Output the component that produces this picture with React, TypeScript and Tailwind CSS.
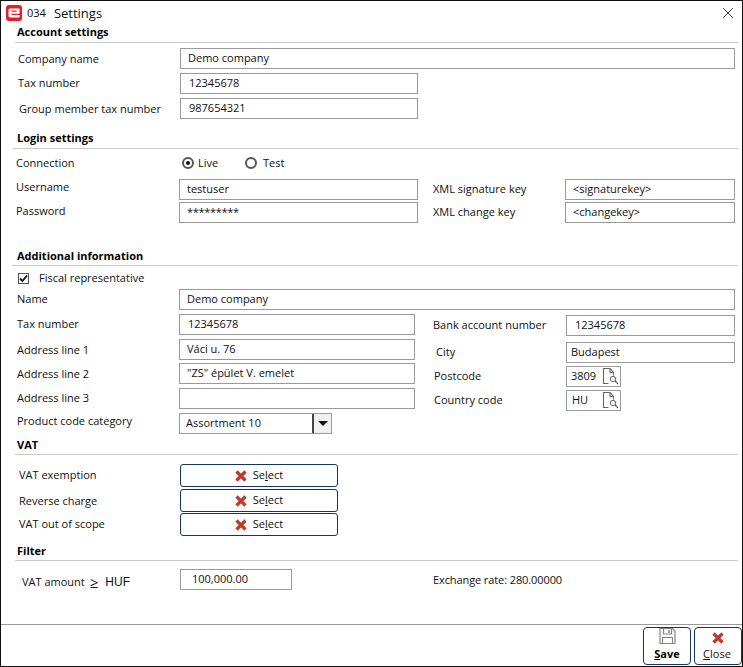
import { X } from 'lucide-react';

const font = { fontFamily: '"Open Sans", sans-serif' };

function Heading({ title, className = '' }: { title: string; className?: string }) {
  return (
    <div className={`border-b border-[#c8c8c8] h-[20px] text-[11px] leading-[17px] font-bold text-black ${className}`}>
      {title}
    </div>
  );
}

function Field({ value, className = '' }: { value: string; className?: string }) {
  return (
    <div className={`border border-[#9a9a9a] bg-white h-[21px] pl-[7px] text-[11px] leading-[18px] text-[#111] whitespace-nowrap ${className}`}>
      {value}
    </div>
  );
}

function Label({ text, className = '' }: { text: string; className?: string }) {
  return <div className={`text-[11px] leading-[16px] text-[#111] whitespace-nowrap ${className}`}>{text}</div>;
}

function LookupIcon() {
  return (
    <svg width="17" height="17" viewBox="0 0 17 17" fill="none" className="shrink-0">
      <path d="M6.5 15.500H1.500V.500h6.500l3.500 4v3M8 .500v4h3.500" stroke="#666" strokeWidth="1.1" />
      <circle cx="11" cy="11" r="2.700" stroke="#666" strokeWidth="1" />
      <path d="M13 13l3 3" stroke="#666" strokeWidth="1.3" />
    </svg>
  );
}

function RedX({ size = 12 }: { size?: number }) {
  return (
    <svg width={size} height={size} viewBox="0 0 12 12" className="shrink-0">
      <path d="M1.500 1.500l9 9M10.500 1.500l-9 9" stroke="#c0392b" strokeWidth="3.200" />
    </svg>
  );
}

function SelectButton({ className = '' }: { className?: string }) {
  return (
    <div className={`w-[158px] h-[23px] rounded-[3px] border border-[#12395b] flex items-center justify-center gap-[6px] text-[11px] text-[#111] ${className}`}>
      <RedX />
      <span>
        Se<span className="underline">l</span>ect
      </span>
    </div>
  );
}

export default function App() {
  return (
    <div style={font} className="w-[743px] h-[667px] bg-white border border-[#111] flex flex-col overflow-hidden">
      {/* title */}
      <div className="h-[22px] flex items-center pl-[5px] pr-[5px] pt-[2px] text-[#111] shrink-0">
        <div className="w-[16px] h-[16px] bg-[#e2202c] rounded-[3px] flex items-center justify-center">
          <svg width="12" height="10" viewBox="0 0 12 10">
            <path d="M.5 2.200Q.5 .500 2 .500H11.500V5.800H3.500V7H11.500V9.500H2Q.5 9.500 .5 7.800z M3.500 2.600V3.800H8.500V2.600z" fill="#fff" fillRule="evenodd" />
          </svg>
        </div>
        <span className="ml-[5px] text-[11px]">034</span>
        <span className="ml-[8px] text-[13px] leading-none">Settings</span>
        <X size={18} strokeWidth={1.1} className="ml-auto text-[#111]" />
      </div>

      {/* account settings */}
      <Heading title="Account settings" className="ml-[14px] mr-[4px] pl-[2px]" />
      <div className="pl-[17px] flex items-center h-[21px] mt-[5px]">
        <Label text="Company name" className="w-[162px]" />
        <Field value="Demo company" className="w-[555px]" />
      </div>
      <div className="pl-[17px] flex items-center h-[21px] mt-[4px]">
        <Label text="Tax number" className="w-[162px] mb-[2px]" />
        <Field value="12345678" className="w-[238px] !pl-[8px]" />
      </div>
      <div className="pl-[18px] flex items-center h-[21px] mt-[4px]">
        <Label text="Group member tax number" className="w-[161px]" />
        <Field value="987654321" className="w-[238px] !pl-[8px]" />
      </div>

      {/* login settings */}
      <Heading title="Login settings" className="ml-[12px] mr-[4px] pl-[4px] mt-[10px]" />
      <div className="pl-[15px] flex items-center h-[16px] mt-[6px]">
        <Label text="Connection" className="w-[166px]" />
        <div className="w-[12px] h-[12px] rounded-full border-2 border-[#555] flex items-center justify-center">
          <div className="w-[4px] h-[4px] rounded-full bg-[#111]" />
        </div>
        <Label text="Live" className="ml-[4px] w-[47px]" />
        <div className="w-[12px] h-[12px] rounded-full border-2 border-[#555]" />
        <Label text="Test" className="ml-[6px]" />
      </div>
      <div className="pl-[15px] flex items-center h-[21px] mt-[8px]">
        <Label text="Username" className="w-[163px] mb-[6px]" />
        <Field value="testuser" className="w-[239px]" />
        <Label text="XML signature key" className="ml-[15px] w-[132px] mb-[2px]" />
        <Field value="<signaturekey>" className="w-[170px]" />
      </div>
      <div className="pl-[15px] flex items-center h-[21px] mt-[2px]">
        <Label text="Password" className="w-[163px] mb-[4px]" />
        <Field value="*********" className="w-[239px] tracking-[-0.3px]" />
        <Label text="XML change key" className="ml-[15px] w-[132px] mb-[2px]" />
        <Field value="<changekey>" className="w-[170px]" />
      </div>

      {/* additional information */}
      <Heading title="Additional information" className="ml-[11px] mr-[4px] pl-[5px] pt-[1px] mt-[23px]" />
      <div className="pl-[17px] flex items-center h-[16px] mt-[4px]">
        <div className="w-[11px] h-[11px] border border-[#555] flex items-center justify-center">
          <svg width="9" height="9" viewBox="0 0 9 9" fill="none">
            <path d="M1 4.500l2.500 2.500L8 1.500" stroke="#111" strokeWidth="1.800" />
          </svg>
        </div>
        <Label text="Fiscal representative" className="ml-[10px]" />
      </div>
      <div className="pl-[16px] flex items-center h-[21px] mt-[3px]">
        <Label text="Name" className="w-[162px] mb-[2px]" />
        <Field value="Demo company" className="w-[556px]" />
      </div>

      <div className="flex mt-[4px]">
        <div className="w-[432px] pl-[16px] shrink-0 flex flex-col">
          <div className="flex items-center h-[21px]">
            <Label text="Tax number" className="w-[162px] mb-[2px]" />
            <Field value="12345678" className="w-[236px] !pl-[8px]" />
          </div>
          <div className="flex items-center h-[21px] mt-[4px]">
            <Label text="Address line 1" className="w-[162px]" />
            <Field value="Váci u. 76" className="w-[236px]" />
          </div>
          <div className="flex items-center h-[21px] mt-[3px]">
            <Label text="Address line 2" className="w-[162px]" />
            <Field value='"ZS" épület V. emelet' className="w-[236px]" />
          </div>
          <div className="flex items-center h-[21px] mt-[4px]">
            <Label text="Address line 3" className="w-[162px] mb-[2px]" />
            <Field value="" className="w-[236px]" />
          </div>
          <div className="flex items-center h-[21px] mt-[4px]">
            <Label text="Product code category" className="w-[162px] mb-[6px]" />
            <div className="w-[153px] h-[21px] border border-[#9a9a9a] flex items-center pl-[6px] text-[11px] text-[#111]">
              <span className="flex-1">Assortment 10</span>
              <div className="w-[19px] h-[19px] bg-[#f0f0f0] border-l-2 border-[#444] flex items-center justify-center">
                <div className="w-0 h-0 border-x-[5px] border-x-transparent border-t-[5px] border-t-[#111]" />
              </div>
            </div>
          </div>
        </div>
        <div className="flex flex-col">
          <div className="flex items-center h-[21px] mt-[1px]">
            <Label text="Bank account number" className="w-[133px] mb-[2px]" />
            <Field value="12345678" className="w-[169px] !pl-[8px]" />
          </div>
          <div className="flex items-center h-[21px] mt-[6px]">
            <Label text="City" className="w-[130px] ml-[3px] mb-[2px]" />
            <Field value="Budapest" className="w-[169px] !pl-[4px]" />
          </div>
          <div className="flex items-center h-[21px] mt-[3px]">
            <Label text="Postcode" className="w-[132px] ml-[1px] mb-[1px]" />
            <div className="w-[55px] h-[21px] border border-[#9a9a9a] flex items-center pl-[4px] text-[11px] text-[#111]">
              <span className="w-[31px]">3809</span>
              <LookupIcon />
            </div>
          </div>
          <div className="flex items-center h-[21px] mt-[3px]">
            <Label text="Country code" className="w-[132px] ml-[1px] mb-[1px]" />
            <div className="w-[55px] h-[21px] border border-[#9a9a9a] flex items-center pl-[5px] text-[11px] text-[#111]">
              <span className="w-[30px]">HU</span>
              <LookupIcon />
            </div>
          </div>
        </div>
      </div>

      {/* vat */}
      <Heading title="VAT" className="ml-[14px] mr-[4px] pl-[2px] pt-[1px] mt-[1px]" />
      <div className="pl-[18px] flex items-center mt-[9px]">
        <Label text="VAT exemption" className="w-[161px] mb-[2px]" />
        <SelectButton />
      </div>
      <div className="pl-[18px] flex items-center mt-[2px]">
        <Label text="Reverse charge" className="w-[161px]" />
        <SelectButton />
      </div>
      <div className="pl-[18px] flex items-center mt-[1px]">
        <Label text="VAT out of scope" className="w-[161px] mb-[2px]" />
        <SelectButton />
      </div>

      {/* filter */}
      <Heading title="Filter" className="ml-[14px] mr-[4px] pl-[2px] pt-[1px] mt-[5px]" />
      <div className="pl-[21px] flex items-center h-[21px] mt-[8px]">
        <div className="w-[158px] mt-[5px] flex items-center text-[11px] text-[#111] whitespace-nowrap">
          VAT amount
          <span className="ml-[5px] text-[15px] leading-none">≥</span>
          <span style={{ fontFamily: '"Liberation Sans", sans-serif' }} className="ml-[7px] text-[12px]">HUF</span>
        </div>
        <Field value="100,000.00" className="w-[112px] !pl-[11px]" />
        <Label text="Exchange rate: 280.00000" className="ml-[141px] tracking-[-0.1px]" />
      </div>

      {/* footer */}
      <div className="mt-auto border-t border-[#999] h-[42px] shrink-0 flex justify-end items-start gap-[3px] pt-[2px]">
        <div className="w-[48px] h-[38px] rounded-[4px] border border-[#12395b] flex flex-col items-center text-[11px] leading-[14px] font-bold text-black">
          <svg width="17" height="16" viewBox="0 0 17 16" fill="none">
            <path d="M1 .500h12.500L16 3v12.500H1z" stroke="#888" strokeWidth="1.200" />
            <path d="M4.500 1v5h8V1M3.500 15.500V9.500h10v6" stroke="#888" strokeWidth="1.200" />
            <path d="M10 2v3" stroke="#888" strokeWidth="1.500" />
          </svg>
          <span className="mt-[3px]">
            <span className="underline">S</span>ave
          </span>
        </div>
        <div className="w-[48px] h-[38px] rounded-[4px] border border-[#12395b] flex flex-col items-center text-[11px] leading-[14px] text-[#111]">
          <div className="mt-[4px]">
            <RedX size={12} />
          </div>
          <span className="mt-[3px] mr-[2px]">
            <span className="underline">C</span>lose
          </span>
        </div>
      </div>
    </div>
  );
}
